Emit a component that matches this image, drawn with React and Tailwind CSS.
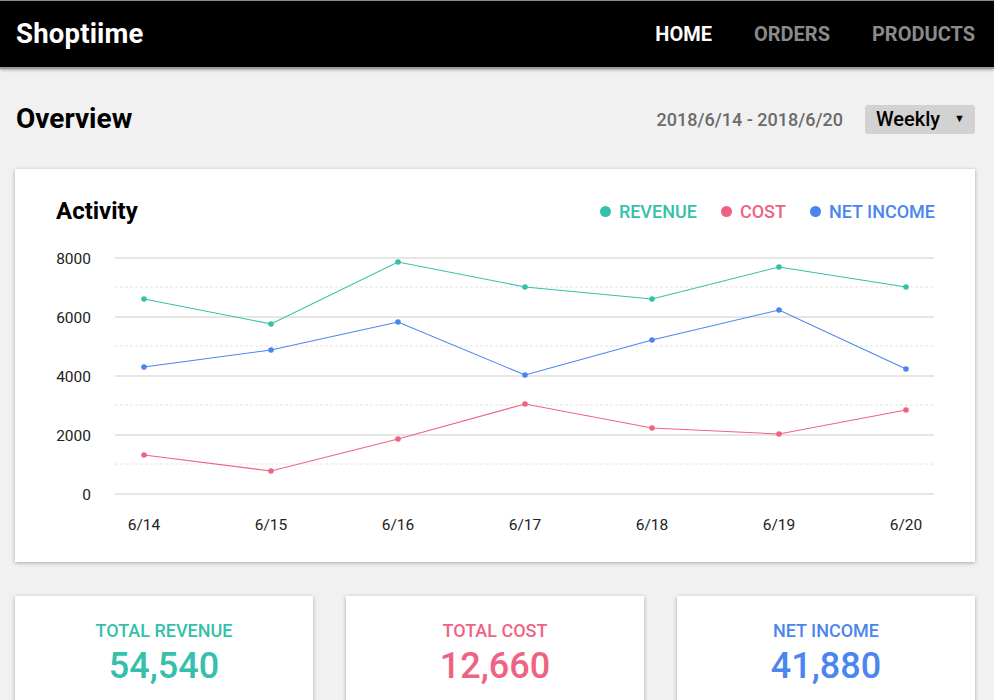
import React from "react";

const XS = [129, 256, 383, 510, 637, 764, 891];
const LABELS = ["6/14", "6/15", "6/16", "6/17", "6/18", "6/19", "6/20"];

// y positions already scaled to the chart (0 -> 269, 8000 -> 33)
const SERIES = [
  { name: "revenue", color: "#36bfaa", ys: [74, 99, 37, 62, 74, 42, 62] },
  { name: "net", color: "#4b86ee", ys: [142, 125, 97, 150, 115, 85, 144] },
  { name: "cost", color: "#ef6382", ys: [230, 246, 214, 179, 203, 209, 185] },
];

const GRID = [
  { y: 33, label: "8000" },
  { y: 92, label: "6000" },
  { y: 151, label: "4000" },
  { y: 210, label: "2000" },
  { y: 269, label: "0" },
];

const DASHED = [62, 121, 180, 239];

function Chart() {
  return (
    <svg width="960" height="330" className="block" style={{ fontFamily: "Roboto, sans-serif" }}>
      {DASHED.map((y) => (
        <line key={y} x1="100" x2="919" y1={y} y2={y} stroke="#e4e4e4" strokeWidth="1" strokeDasharray="3 2" />
      ))}
      {GRID.map((g) => (
        <g key={g.label}>
          <line x1="100" x2="919" y1={g.y} y2={g.y} stroke="#dedede" strokeWidth="1.5" />
          <text x="76" y={g.y + 5.5} textAnchor="end" fontSize="15.5" fill="#222">
            {g.label}
          </text>
        </g>
      ))}
      {LABELS.map((l, i) => (
        <text key={l} x={XS[i]} y="305" textAnchor="middle" fontSize="15.5" fill="#222">
          {l}
        </text>
      ))}
      {SERIES.map((s) => (
        <g key={s.name}>
          <polyline
            fill="none"
            stroke={s.color}
            strokeWidth="1.1"
            points={s.ys.map((y, i) => `${XS[i]},${y}`).join(" ")}
          />
          {s.ys.map((y, i) => (
            <circle key={i} cx={XS[i]} cy={y} r="2.8" fill={s.color} />
          ))}
        </g>
      ))}
    </svg>
  );
}

const LegendItem = ({ color, dot, children }) => (
  <div className="flex items-center gap-[8px]">
    <span className={`w-[11px] h-[11px] rounded-full ${dot}`} />
    <span className={`text-[18px] font-medium ${color}`}>{children}</span>
  </div>
);

const StatCard = ({ label, value, color }) => (
  <div className="bg-white h-[140px] shadow-[0_1px_4px_rgba(0,0,0,0.3)] flex flex-col items-center pt-[25px]">
    <div className={`text-[18px] font-medium leading-[20px] ${color}`}>{label}</div>
    <div className={`text-[36px] font-medium leading-[44px] mt-[3px] ${color}`}>{value}</div>
  </div>
);

export default function App() {
  return (
    <div className="min-h-[700px] bg-[#f1f1f1] overflow-hidden" style={{ fontFamily: "Roboto, 'Noto Sans', sans-serif" }}>
      <header className="h-[69px] bg-black border-t border-[#8a8a8a] border-b-2 border-b-[#9a9a9a] flex items-center justify-between pl-[16px] pr-[19px] shadow-[0_1px_3px_rgba(0,0,0,0.3)]">
        <div className="text-white text-[27.5px] font-bold tracking-[0.2px]">Shoptiime</div>
        <nav className="flex items-center gap-[42px] text-[20px] font-bold">
          <span className="text-white">HOME</span>
          <span className="text-[#8a8a8a]">ORDERS</span>
          <span className="text-[#8a8a8a]">PRODUCTS</span>
        </nav>
      </header>

      <main className="pl-[15px] pr-[19px]">
        <div className="h-[100px] flex items-center justify-between pl-[1px]">
          <h1 className="text-[28px] font-bold text-black">Overview</h1>
          <div className="flex items-center gap-[22px]">
            <span className="text-[18px] text-[#6b6b6b] font-medium">2018/6/14 - 2018/6/20</span>
            <div className="w-[110px] h-[29px] bg-[#d2d2d2] rounded-[3px] flex items-center justify-between pl-[11px] pr-[10px]">
              <span className="text-[20px] font-medium text-black">Weekly</span>
              <span className="text-[11px] text-black">▼</span>
            </div>
          </div>
        </div>

        <section className="bg-white h-[393px] shadow-[0_1px_4px_rgba(0,0,0,0.3)]">
          <div className="flex items-center justify-between pl-[41px] pr-[40px] pt-[28px] h-[56px]">
            <h2 className="text-[24px] font-bold text-black leading-[28px]">Activity</h2>
            <div className="flex items-center gap-[24px]">
              <LegendItem color="text-[#36bfaa]" dot="bg-[#36bfaa]">REVENUE</LegendItem>
              <LegendItem color="text-[#ef6382]" dot="bg-[#ef6382]">COST</LegendItem>
              <LegendItem color="text-[#4b86ee]" dot="bg-[#4b86ee]">NET INCOME</LegendItem>
            </div>
          </div>
          <Chart />
        </section>

        <div className="grid grid-cols-3 gap-[33px] mt-[34px]">
          <StatCard label="TOTAL REVENUE" value="54,540" color="text-[#36bfaa]" />
          <StatCard label="TOTAL COST" value="12,660" color="text-[#ef6382]" />
          <StatCard label="NET INCOME" value="41,880" color="text-[#4b86ee]" />
        </div>
      </main>
    </div>
  );
}
